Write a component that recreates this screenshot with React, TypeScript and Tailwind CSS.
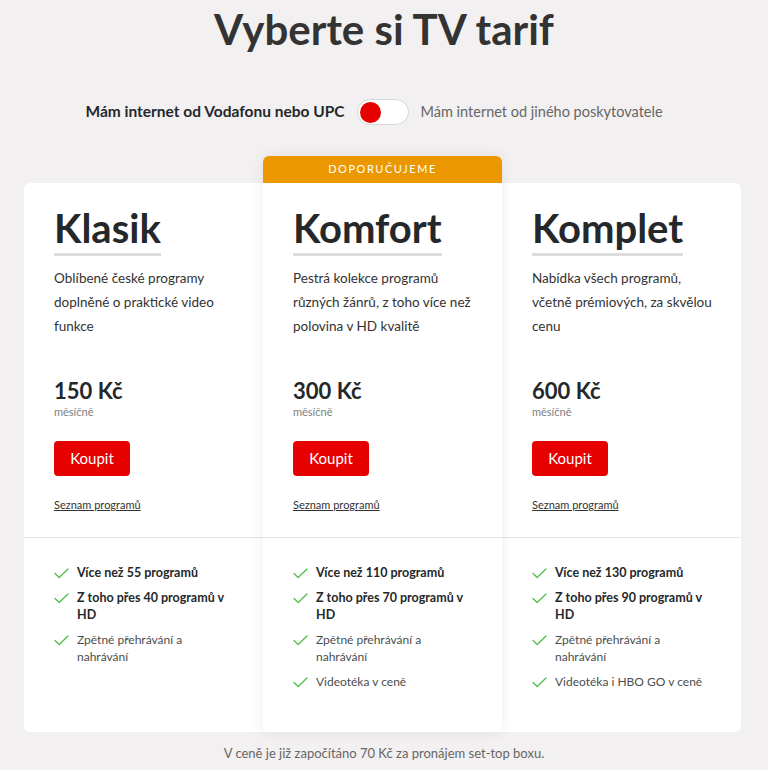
import React from "react";

type Position = "left" | "middle" | "right";

type Plan = {
  name: string;
  description: string;
  price: string;
  features: { text: string; bold?: boolean }[];
  recommended?: boolean;
};

const plans: Plan[] = [
  {
    name: "Klasik",
    description: "Oblíbené české programy doplněné o praktické video funkce",
    price: "150 Kč",
    features: [
      { text: "Více než 55 programů", bold: true },
      { text: "Z toho přes 40 programů v HD", bold: true },
      { text: "Zpětné přehrávání a nahrávání" },
    ],
  },
  {
    name: "Komfort",
    description: "Pestrá kolekce programů různých žánrů, z toho více než polovina v HD kvalitě",
    price: "300 Kč",
    recommended: true,
    features: [
      { text: "Více než 110 programů", bold: true },
      { text: "Z toho přes 70 programů v HD", bold: true },
      { text: "Zpětné přehrávání a nahrávání" },
      { text: "Videotéka v ceně" },
    ],
  },
  {
    name: "Komplet",
    description: "Nabídka všech programů, včetně prémiových, za skvělou cenu",
    price: "600 Kč",
    features: [
      { text: "Více než 130 programů", bold: true },
      { text: "Z toho přes 90 programů v HD", bold: true },
      { text: "Zpětné přehrávání a nahrávání" },
      { text: "Videotéka i HBO GO v ceně" },
    ],
  },
];

function Check() {
  return (
    <svg width="15" height="11" viewBox="0 0 15 11" fill="none" className="mt-[4px] shrink-0">
      <path
        d="M1 5.5 L5.2 9.5 L14 1"
        stroke="#4fbf4a"
        strokeWidth="1.3"
        strokeLinecap="round"
        strokeLinejoin="round"
      />
    </svg>
  );
}

function PriceBlock({ price }: { price: string }) {
  return (
    <div>
      <div className="text-[22px] font-bold leading-[26px] text-[#25282b]">{price}</div>
      <div className="mt-[1px] text-[11px] leading-[14px] text-[#7e7e7e]">měsíčně</div>
      <button className="mt-[22px] h-[35px] w-[76px] rounded-[4px] bg-[#e60000] text-[15px] text-white">
        Koupit
      </button>
      <div className="mt-[15px]">
        <a className="text-[11px] text-[#333] underline">Seznam programů</a>
      </div>
    </div>
  );
}

function PlanCard({ plan, position }: { plan: Plan; position: Position }) {
  const rounded =
    position === "left" ? "rounded-l-[6px]" : position === "right" ? "rounded-r-[6px]" : "";
  return (
    <div
      className={`relative flex w-[239px] flex-col ${
        position === "middle" ? "z-10 rounded-t-[6px] shadow-[0_0_14px_rgba(0,0,0,0.08)]" : ""
      }`}
    >
      {plan.recommended && (
        <div className="flex h-[27px] items-center justify-center rounded-t-[6px] bg-[#eb9700] text-[11px] tracking-[0.14em] text-white">
          DOPORUČUJEME
        </div>
      )}
      <div className={`flex h-[549px] flex-col bg-white ${rounded}`}>
        <div className="flex h-[355px] flex-col border-b border-[#e6e6e6] pl-[30px] pr-[24px] pt-[22px]">
          <div>
            <h2 className="inline-block border-b-[3px] border-[#dddddd] pb-[2px] text-[40px] font-bold leading-[46px] text-[#25282b]">
              {plan.name}
            </h2>
          </div>
          <p className="mt-[10px] h-[72px] text-[13.5px] leading-[24px] text-[#333]">
            {plan.description}
          </p>
          <div className="mt-[40px]">
            <PriceBlock price={plan.price} />
          </div>
        </div>
        <ul className="flex flex-col gap-[8px] pl-[30px] pr-[30px] pt-[26px]">
          {plan.features.map((f) => (
            <li key={f.text} className="flex gap-[8px]">
              <Check />
              <span
                className={`leading-[17px] ${
                  f.bold ? "text-[12.5px] font-bold text-[#25282b]" : "text-[12px] text-[#4a4d4e]"
                }`}
              >
                {f.text}
              </span>
            </li>
          ))}
        </ul>
      </div>
    </div>
  );
}

export default function App() {
  return (
    <div
      className="min-h-[770px] bg-[#f3f0f1] text-[#333]"
      style={{ fontFamily: "Lato, 'Open Sans', sans-serif" }}
    >
      <h1 className="pt-[3px] text-center text-[42px] font-bold leading-[52px] text-[#333]">
        Vyberte si TV tarif
      </h1>

      <div className="mt-[44px] flex items-center justify-center gap-[12px] pr-[20px]">
        <span className="text-[15.5px] font-bold text-[#25282b]">Mám internet od Vodafonu nebo UPC</span>
        <div className="flex h-[26px] w-[52px] items-center rounded-full border border-[#d6d6d6] bg-white px-[2px]">
          <div className="h-[21px] w-[21px] rounded-full bg-[#e60000]" />
        </div>
        <span className="text-[14.5px] text-[#666]">Mám internet od jiného poskytovatele</span>
      </div>

      <div className="mt-[31px] flex items-end justify-center pr-[3px]">
        {plans.map((p, i) => (
          <PlanCard key={p.name} plan={p} position={i === 0 ? "left" : i === 1 ? "middle" : "right"} />
        ))}
      </div>

      <p className="mt-[12px] text-center text-[13px] text-[#666]">
        V ceně je již započítáno 70 Kč za pronájem set-top boxu.
      </p>
    </div>
  );
}
